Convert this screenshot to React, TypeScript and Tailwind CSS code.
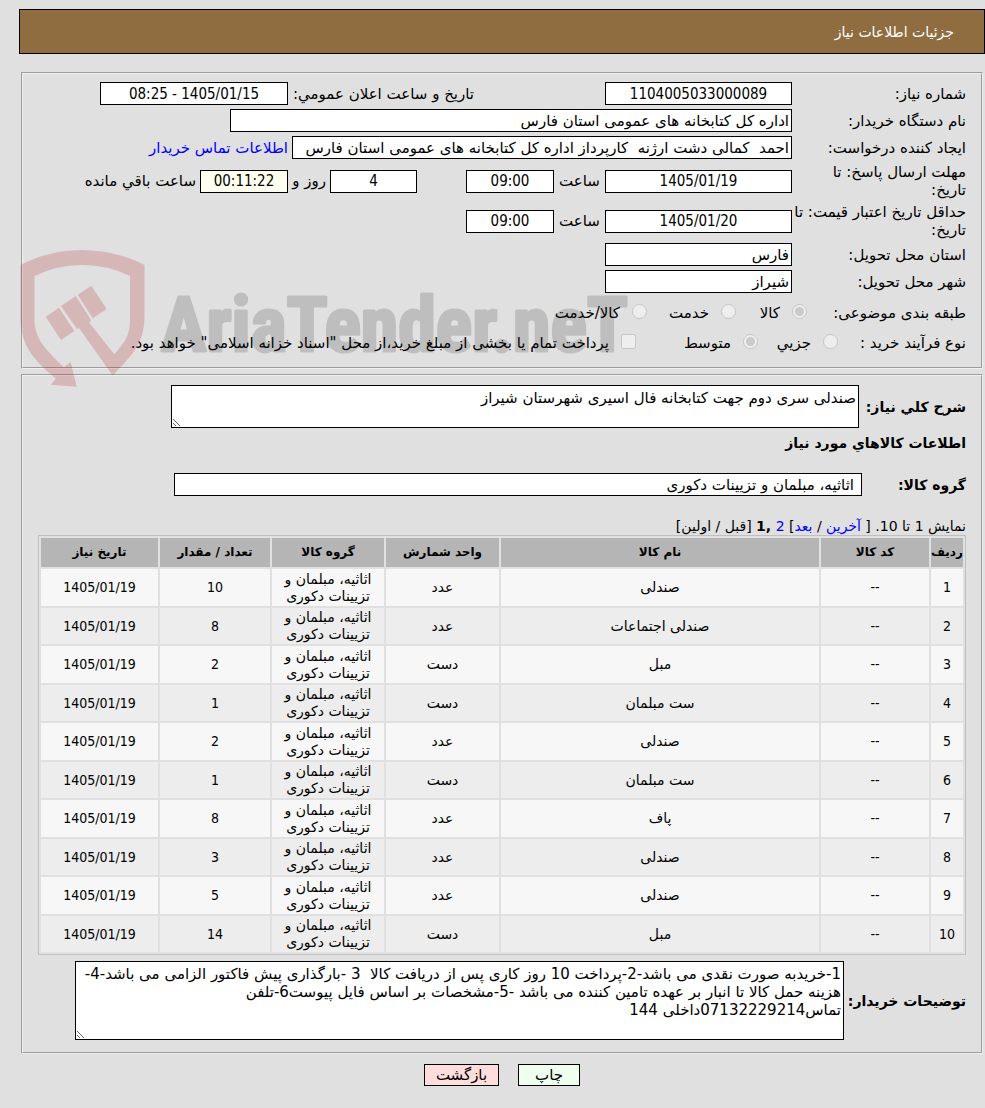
import type { ReactNode } from 'react'

const items = [
  { name: 'صندلی', unit: 'عدد', qty: 10 },
  { name: 'صندلی اجتماعات', unit: 'عدد', qty: 8 },
  { name: 'مبل', unit: 'دست', qty: 2 },
  { name: 'ست مبلمان', unit: 'دست', qty: 1 },
  { name: 'صندلی', unit: 'عدد', qty: 2 },
  { name: 'ست مبلمان', unit: 'دست', qty: 1 },
  { name: 'پاف', unit: 'عدد', qty: 8 },
  { name: 'صندلی', unit: 'عدد', qty: 3 },
  { name: 'صندلی', unit: 'عدد', qty: 5 },
  { name: 'مبل', unit: 'دست', qty: 14 },
]

const group = 'اثاثیه، مبلمان و تزیینات دکوری'

const notes = `1-خریدبه صورت نقدی می باشد-2-پرداخت 10 روز کاری پس از دریافت کالا  3 -بارگذاری پیش فاکتور الزامی می باشد-4-
هزینه حمل کالا تا انبار بر عهده تامین کننده می باشد -5-مشخصات بر اساس فایل پیوست6-تلفن
تماس07132229214داخلی 144`

const box = 'h-[23px] min-w-0 border border-black px-[2px]'
const numeric = "text-center font-['DejaVu_Sans_Condensed','DejaVu_Sans',sans-serif]"

function Field({ id, value, className }: { id: string; value: string; className: string }) {
  return <input id={id} type="text" readOnly defaultValue={value} className={`${box} ${className}`} />
}

function Row({ id, label, children }: { id: string; label: string; children: ReactNode }) {
  return (
    <div className="flex items-center">
      <label htmlFor={id} className="w-[174px] shrink-0 whitespace-pre">{label}</label>
      {children}
    </div>
  )
}

function Watermark() {
  return (
    <svg
      className="pointer-events-none absolute left-5 top-[247px] overflow-visible"
      width="604"
      height="144"
      viewBox="0 0 604 144"
      aria-hidden="true"
    >
      <g fill="#b31818" opacity="0.2">
        <path
          fillRule="evenodd"
          d="M0.5 18Q29 3 62 3Q95 3 124.5 18V70C124 97 113 107 92.7 128.5L59 81L57 82L41 59L55.7 49L71 73L69.5 76L94.3 107.3C105 95 110 88 110 73V29Q88 18 62 18Q37 18 14.5 29V73C15 92 25 102 44 120.3L50.7 115L56.7 139.7L30.7 137.7L36 131.7C12 112 0.5 97 0.5 70Z"
        />
        <path d="M25.7 69.7L39 60.7L54.3 84L41 93Z" />
        <path d="M57.7 47.7L71.3 38.7L86.7 62L72.7 71.3Z" />
      </g>
      <text
        x="141"
        y="104"
        direction="ltr"
        fill="#111111"
        stroke="#111111"
        strokeWidth="3"
        strokeLinejoin="round"
        opacity="0.16"
        fontSize="76"
        fontWeight="700"
        fontFamily="'Liberation Sans Narrow', 'Roboto Condensed', sans-serif"
      >
        AriaTender.neT
      </text>
    </svg>
  )
}

export default function App() {
  return (
    <main
      dir="rtl"
      className="relative min-h-screen bg-[#e0e0e0] pt-[9px] pb-[22px] font-['DejaVu_Sans',sans-serif] text-[15px] leading-[18px] text-black"
    >
      <header className="ml-[19px] flex h-[45px] items-center border border-black bg-[#8f6d40] pr-[30px] text-white">
        <h1 className="text-[14px]">جزئیات اطلاعات نیاز</h1>
      </header>

      {/* Request details */}
      <fieldset className="mt-[18px] mr-[2px] ml-[21px] flex flex-col gap-1 border-2 border-[#f0f0f0] px-[15px] pt-2 pb-3 [border-style:groove]">
        <Row id="number" label="شماره نیاز:">
          <Field id="number" value="1104005033000089" className={`w-[187px] bg-white ${numeric}`} />
          <label htmlFor="announced" className="mr-[131px] w-[186px] whitespace-nowrap">تاریخ و ساعت اعلان عمومي:</label>
          <Field id="announced" value="1405/01/15 - 08:25" className={`w-[188px] bg-white ${numeric}`} />
        </Row>
        <Row id="buyer" label="نام دستگاه خریدار:">
          <Field id="buyer" value="اداره کل کتابخانه های عمومی استان فارس" className="w-[562px] bg-white" />
        </Row>
        <Row id="creator" label="ایجاد کننده درخواست:">
          <Field id="creator" value="احمد  کمالی دشت ارژنه  کارپرداز اداره کل کتابخانه های عمومی استان فارس" className="w-[500px] bg-white" />
          <a href="#contact" className="mr-1 whitespace-nowrap text-[#0000ff]">اطلاعات تماس خریدار</a>
        </Row>
        <Row id="deadline" label={'مهلت ارسال پاسخ: تا\nتاریخ:'}>
          <Field id="deadline" value="1405/01/19" className={`w-[187px] bg-white ${numeric}`} />
          <label htmlFor="deadline-time" className="w-[51px] text-center">ساعت</label>
          <Field id="deadline-time" value="09:00" className={`w-[88px] bg-white ${numeric}`} />
          <Field id="days" value="4" className={`mr-[49px] w-[87px] bg-white ${numeric}`} />
          <label htmlFor="days" className="w-[42px] pr-1 whitespace-nowrap">روز و</label>
          <Field id="remaining" value="00:11:22" className={`w-[88px] bg-[#fffff0] ${numeric}`} />
          <label htmlFor="remaining" className="mr-1 whitespace-nowrap">ساعت باقي مانده</label>
        </Row>
        <Row id="validity" label={'حداقل تاریخ اعتبار قیمت: تا\nتاریخ:'}>
          <Field id="validity" value="1405/01/20" className={`w-[187px] bg-white ${numeric}`} />
          <label htmlFor="validity-time" className="w-[51px] text-center">ساعت</label>
          <Field id="validity-time" value="09:00" className={`w-[88px] bg-white ${numeric}`} />
        </Row>
        <Row id="province" label="استان محل تحویل:">
          <Field id="province" value="فارس" className="w-[187px] bg-white" />
        </Row>
        <Row id="city" label="شهر محل تحویل:">
          <Field id="city" value="شیراز" className="w-[187px] bg-white" />
        </Row>
        <div className="mt-1 flex h-6 items-center" role="radiogroup" aria-labelledby="subject">
          <span id="subject" className="w-[159px]">طبقه بندی موضوعی:</span>
          <label className="flex w-[71px] gap-3 whitespace-nowrap">
            <input type="radio" name="subject" disabled defaultChecked className="size-[15px] shrink-0" />
            کالا
          </label>
          <label className="flex w-[89px] gap-3 whitespace-nowrap">
            <input type="radio" name="subject" disabled className="size-[15px] shrink-0" />
            خدمت
          </label>
          <label className="flex gap-3 whitespace-nowrap">
            <input type="radio" name="subject" disabled className="size-[15px] shrink-0" />
            کالا/خدمت
          </label>
        </div>
        <div className="mt-[2px] flex h-6 items-center" role="radiogroup" aria-labelledby="process">
          <span id="process" className="w-[128px]">نوع فرآیند خرید :</span>
          <label className="flex w-20 gap-3 whitespace-nowrap">
            <input type="radio" name="process" disabled className="size-[15px] shrink-0" />
            جزیي
          </label>
          <label className="flex w-[122px] gap-3 whitespace-nowrap">
            <input type="radio" name="process" disabled defaultChecked className="size-[15px] shrink-0" />
            متوسط
          </label>
          <label className="flex gap-3 whitespace-nowrap">
            <input type="checkbox" disabled className="size-[15px] shrink-0" />
            پرداخت تمام یا بخشی از مبلغ خرید،از محل "اسناد خزانه اسلامی" خواهد بود.
          </label>
        </div>
      </fieldset>

      {/* Requested goods */}
      <fieldset className="mt-[5px] mr-[2px] ml-[21px] border-2 border-[#f0f0f0] px-[15px] pt-[9px] pb-3 [border-style:groove]">
        <div className="flex items-center">
          <label htmlFor="summary" className="w-[107px] shrink-0 whitespace-nowrap text-[14px] font-bold">شرح کلي نیاز:</label>
          <textarea
            id="summary"
            readOnly
            defaultValue="صندلی سری دوم جهت کتابخانه فال اسیری شهرستان شیراز"
            className="h-[43px] w-[688px] min-w-0 border border-black bg-white px-[2px] pt-[3px]"
          />
        </div>
        <h2 className="mt-[6px] text-[14px] font-bold">اطلاعات کالاهاي مورد نیاز</h2>
        <div className="mt-[21px] flex items-center">
          <label htmlFor="group" className="w-[104px] shrink-0 text-[14px] font-bold">گروه کالا:</label>
          <input id="group" type="text" readOnly defaultValue={group} className="h-[23px] w-[688px] min-w-0 border border-black bg-white px-[7px]" />
        </div>

        <nav className="mt-[21px] text-[14px]">
          نمایش 1 تا 10. [ <a href="#last" className="text-[#0000ff]">آخرین</a> / <a href="#next" className="text-[#0000ff]">بعد</a>]{' '}
          <a href="#page-2" className="text-[#0000ff]">2</a> <b>,1</b> [قبل / اولین]
        </nav>

        <table className="w-full table-fixed border-separate border-spacing-[2px] border border-[#bfbfbf] text-center text-[14px] leading-[17px]">
          <thead>
            <tr className="h-[29px] bg-[#b5b5b5] text-[12px]">
              <th className="w-8 p-0">ردیف</th>
              <th className="w-[108px]">کد کالا</th>
              <th>نام کالا</th>
              <th className="w-[113px]">واحد شمارش</th>
              <th className="w-[112px]">گروه کالا</th>
              <th className="w-[110px]">تعداد / مقدار</th>
              <th className="w-[117px]">تاریخ نیاز</th>
            </tr>
          </thead>
          <tbody>
            {items.map((item, i) => (
              <tr key={i} className="odd:h-[37px] odd:bg-[#f7f7f7] even:h-9 even:bg-[#ededed]">
                <td className={numeric}>{i + 1}</td>
                <td className={numeric}>--</td>
                <td>{item.name}</td>
                <td>{item.unit}</td>
                <td className="px-2">{group}</td>
                <td className={numeric}>{item.qty}</td>
                <td className={numeric}>1405/01/19</td>
              </tr>
            ))}
          </tbody>
        </table>

        <div className="mt-[6px] flex items-center">
          <label htmlFor="notes" className="w-[122px] shrink-0 whitespace-nowrap text-[14px] font-bold">توضیحات خریدار:</label>
          <textarea
            id="notes"
            readOnly
            defaultValue={notes}
            className="h-[79px] w-[769px] min-w-0 border border-black bg-white px-[2px] pt-[3px]"
          />
        </div>
      </fieldset>

      <div className="mt-[10px] ml-[19px] flex justify-center gap-[19px]">
        <button type="button" className="h-[22px] w-[62px] border border-black bg-[#eeffee]">چاپ</button>
        <button type="button" className="h-[22px] w-[75px] border border-black bg-[#ffdddd]">بازگشت</button>
      </div>

      <Watermark />
    </main>
  )
}
